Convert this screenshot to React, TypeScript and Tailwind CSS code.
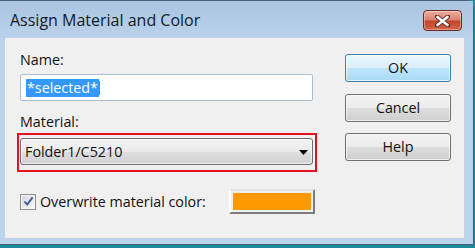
function CloseButton() {
  return (
    <div className="flex h-[21px] w-[39px] items-center justify-center rounded-[4px] border border-[#6b2b22] bg-[linear-gradient(#eab0a2,#d8826f_45%,#c3452d_55%,#d2664c)] shadow-[inset_0_0_0_1px_rgba(255,255,255,0.35)]">
      <svg width="15" height="12" viewBox="0 0 15 12">
        <path d="M2 1.5 L13 10.5 M13 1.5 L2 10.5" stroke="#5a2a22" strokeWidth="4.2" strokeLinecap="round" />
        <path d="M2.5 2 L12.5 10 M12.5 2 L2.5 10" stroke="#ffffff" strokeWidth="2.6" strokeLinecap="round" />
      </svg>
    </div>
  );
}

function DialogButton({ label, primary }: { label: string; primary?: boolean }) {
  return (
    <div
      className={
        primary
          ? "flex h-[28px] w-[106px] items-center justify-center rounded-[3px] border border-[#3c7fb1] bg-[linear-gradient(#eaf6fd,#d9f0fc_50%,#bee6fd_50%,#a7d9f5)] text-[14.3px] shadow-[inset_0_0_0_1px_rgba(255,255,255,0.7)]"
          : "flex h-[28px] w-[106px] items-center justify-center rounded-[3px] border border-[#707070] bg-[linear-gradient(#f2f2f2,#ebebeb_50%,#dddddd_50%,#cfcfcf)] text-[14.3px] shadow-[inset_0_0_0_1px_rgba(255,255,255,0.7)]"
      }
    >
      {label}
    </div>
  );
}

export default function App() {
  return (
    <div
      className="h-[248px] w-[475px] overflow-hidden bg-[#1a8a98] text-[#111]"
      style={{ fontFamily: '"Open Sans", "Noto Sans", sans-serif' }}
    >
      <div className="flex h-[245px] w-[474px] flex-col rounded-tr-[7px] border-t border-r border-b border-[#4a5d74] bg-[#bcd3ec]">
        {/* title bar */}
        <div className="flex h-[36px] items-center justify-between bg-[linear-gradient(#aac4e2,#b9d1ea)] pr-[11px] pl-[10px]">
          <span className="pt-[1px] text-[16px] leading-[20px] text-[#121a26]">Assign Material and Color</span>
          <div className="mt-[3px]">
            <CloseButton />
          </div>
        </div>

        {/* client area */}
        <div className="ml-[4px] flex h-[202px] w-[461px] border border-[#c3d0de] bg-[#f0f0f0] pl-[15px]">
          <div className="flex w-[293px] flex-col pt-[12px]">
            <div className="text-[14.3px] leading-[20px]">Name:</div>
            <div className="mt-[4px] flex h-[27px] items-center rounded-[2px] border border-[#a9bfd8] bg-white pl-[5px]">
              <span className="bg-[#3399ff] px-[1px] text-[14.3px] leading-[18px] text-white">*selected*</span>
              <span className="h-[14px] w-[1px] bg-[#c7752a]" />
            </div>

            <div className="mt-[11px] text-[14.3px] leading-[20px]">Material:</div>
            <div className="relative mt-[6px]">
              <div className="flex h-[27px] items-center justify-between rounded-[3px] border border-[#707070] bg-[linear-gradient(#f3f3f3,#ebebeb_50%,#dedede_50%,#d2d2d2)] pr-[4px] pl-[4px] shadow-[inset_0_0_0_1px_rgba(255,255,255,0.6)]">
                <span className="text-[14.3px] leading-[18px]">Folder1/C5210</span>
                <svg width="9" height="5" viewBox="0 0 9 5" className="mt-[1px]">
                  <path d="M0 0 H9 L4.5 5 Z" fill="#000" />
                </svg>
              </div>
              <div className="absolute -top-[5px] -right-[4px] -bottom-[7px] -left-[3px] border-2 border-[#e8101c]" />
            </div>

            <div className="mt-[24px] flex h-[25px] w-[295px] items-center">
              <div className="flex h-[16px] w-[16px] items-center justify-center border border-[#8e8f8f] bg-[linear-gradient(135deg,#d5d8dd,#f7f8f9)] shadow-[inset_0_0_0_1px_#f4f4f4]">
                <svg width="11" height="11" viewBox="0 0 11 11">
                  <path d="M1.5 5.5 L4.2 8.6 L9.6 1.4" fill="none" stroke="#3d5a92" strokeWidth="1.9" />
                </svg>
              </div>
              <span className="ml-[4px] text-[14.3px] leading-[18px]">Overwrite material color:</span>
              <div className="ml-auto h-[25px] w-[86px] border-t-2 border-r-2 border-b-2 border-l-2 border-t-[#e3e3e3] border-r-[#7c7c7c] border-b-[#7c7c7c] border-l-[#ffffff] p-[2px]">
                <div className="h-full w-full bg-[#ff9900]" />
              </div>
            </div>
          </div>

          <div className="ml-[32px] flex flex-col gap-[12px] pt-[16px]">
            <DialogButton label="OK" primary />
            <DialogButton label="Cancel" />
            <div className="-mt-[1px]">
              <DialogButton label="Help" />
            </div>
          </div>
        </div>
      </div>
    </div>
  );
}
